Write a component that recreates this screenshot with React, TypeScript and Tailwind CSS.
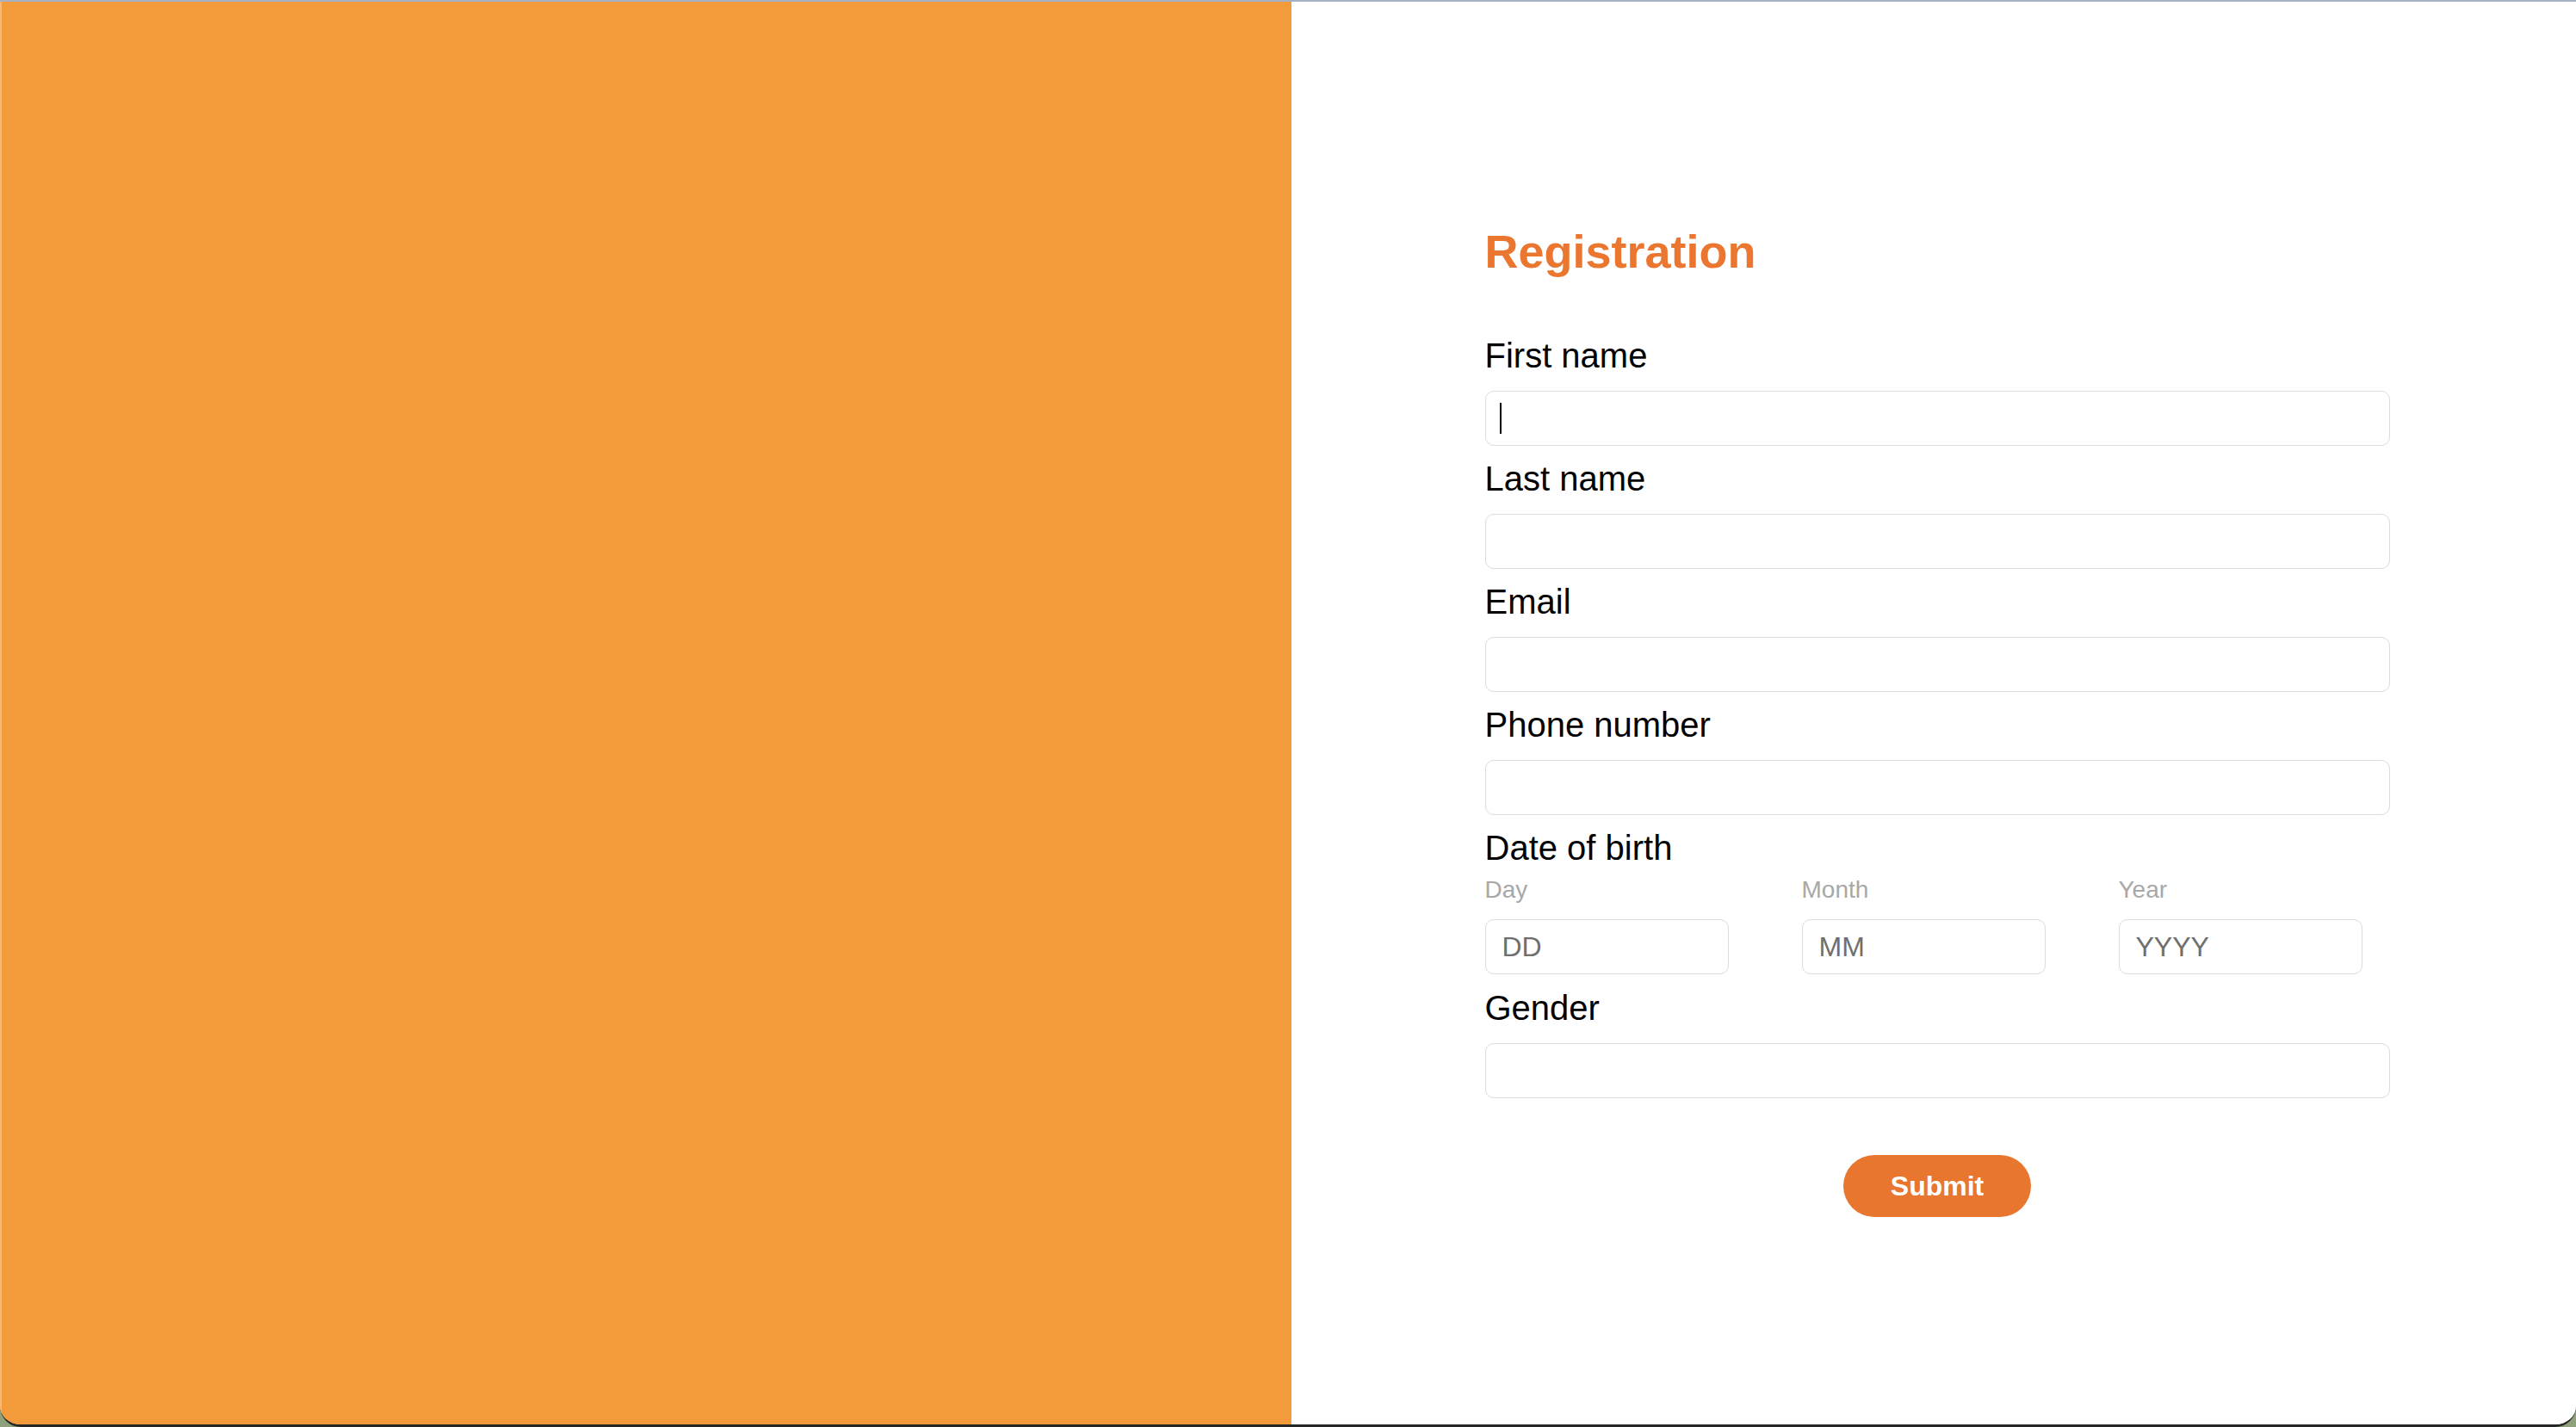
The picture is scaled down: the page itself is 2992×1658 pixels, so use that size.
import React from "react";

const font = { fontFamily: '"Liberation Sans", Arial, Helvetica, sans-serif' };

function Field({ label, caret }: { label: string; caret?: boolean }) {
  return (
    <div className="flex flex-col">
      <label className="text-[40px] leading-[46px] text-black">{label}</label>
      <div className="relative mt-[18px] mb-[15px]">
        <input
          type="text"
          className="box-border h-[64px] w-full rounded-[10px] border border-[#dcdcdc] bg-white px-[18px] text-[32px] outline-none"
          style={font}
        />
        {caret && (
          <span className="pointer-events-none absolute left-[17px] top-[14px] h-[36px] w-[2px] bg-black" />
        )}
      </div>
    </div>
  );
}

function DatePart({ label, placeholder }: { label: string; placeholder: string }) {
  return (
    <div className="flex w-[283px] flex-col">
      <span className="text-[28px] leading-[32px] text-[#a8a8a8]">{label}</span>
      <input
        type="text"
        placeholder={placeholder}
        className="mt-[18px] box-border h-[64px] w-[283px] rounded-[10px] border border-[#dcdcdc] bg-white px-[19px] text-[32px] text-black outline-none placeholder:text-[#6f6f6f]"
        style={font}
      />
    </div>
  );
}

export default function App() {
  return (
    <div className="flex h-[1658px] w-[2992px] flex-col overflow-hidden bg-[#8fa07c]" style={font}>
      <div className="h-[2px] shrink-0 bg-[#a7b1c6]" />
      <div className="flex flex-1 overflow-hidden rounded-b-[24px] border-b-[3px] border-[#262626]">
        <div className="w-[1500px] shrink-0 border-l-2 border-[#f6b878] bg-[#F39B3A]" />
        <div className="flex flex-1 justify-center bg-white pl-[8px]">
          <div className="flex w-[1051px] flex-col pt-[259px]">
            <h1 className="text-[54px] font-bold leading-[62px] text-[#EA7630]">Registration</h1>
            <div className="mt-[67px] flex flex-col">
              <Field label="First name" caret />
              <Field label="Last name" />
              <Field label="Email" />
              <Field label="Phone number" />
              <div className="flex flex-col">
                <label className="text-[40px] leading-[46px] text-black">Date of birth</label>
                <div className="mt-[10px] flex gap-[85px]">
                  <DatePart label="Day" placeholder="DD" />
                  <DatePart label="Month" placeholder="MM" />
                  <DatePart label="Year" placeholder="YYYY" />
                </div>
              </div>
              <div className="mt-[16px]">
                <Field label="Gender" />
              </div>
            </div>
            <div className="mt-[51px] flex justify-center">
              <button
                type="button"
                className="h-[72px] w-[218px] rounded-full bg-[#E9762F] text-[32px] font-bold text-white"
                style={font}
              >
                Submit
              </button>
            </div>
          </div>
        </div>
      </div>
    </div>
  );
}
